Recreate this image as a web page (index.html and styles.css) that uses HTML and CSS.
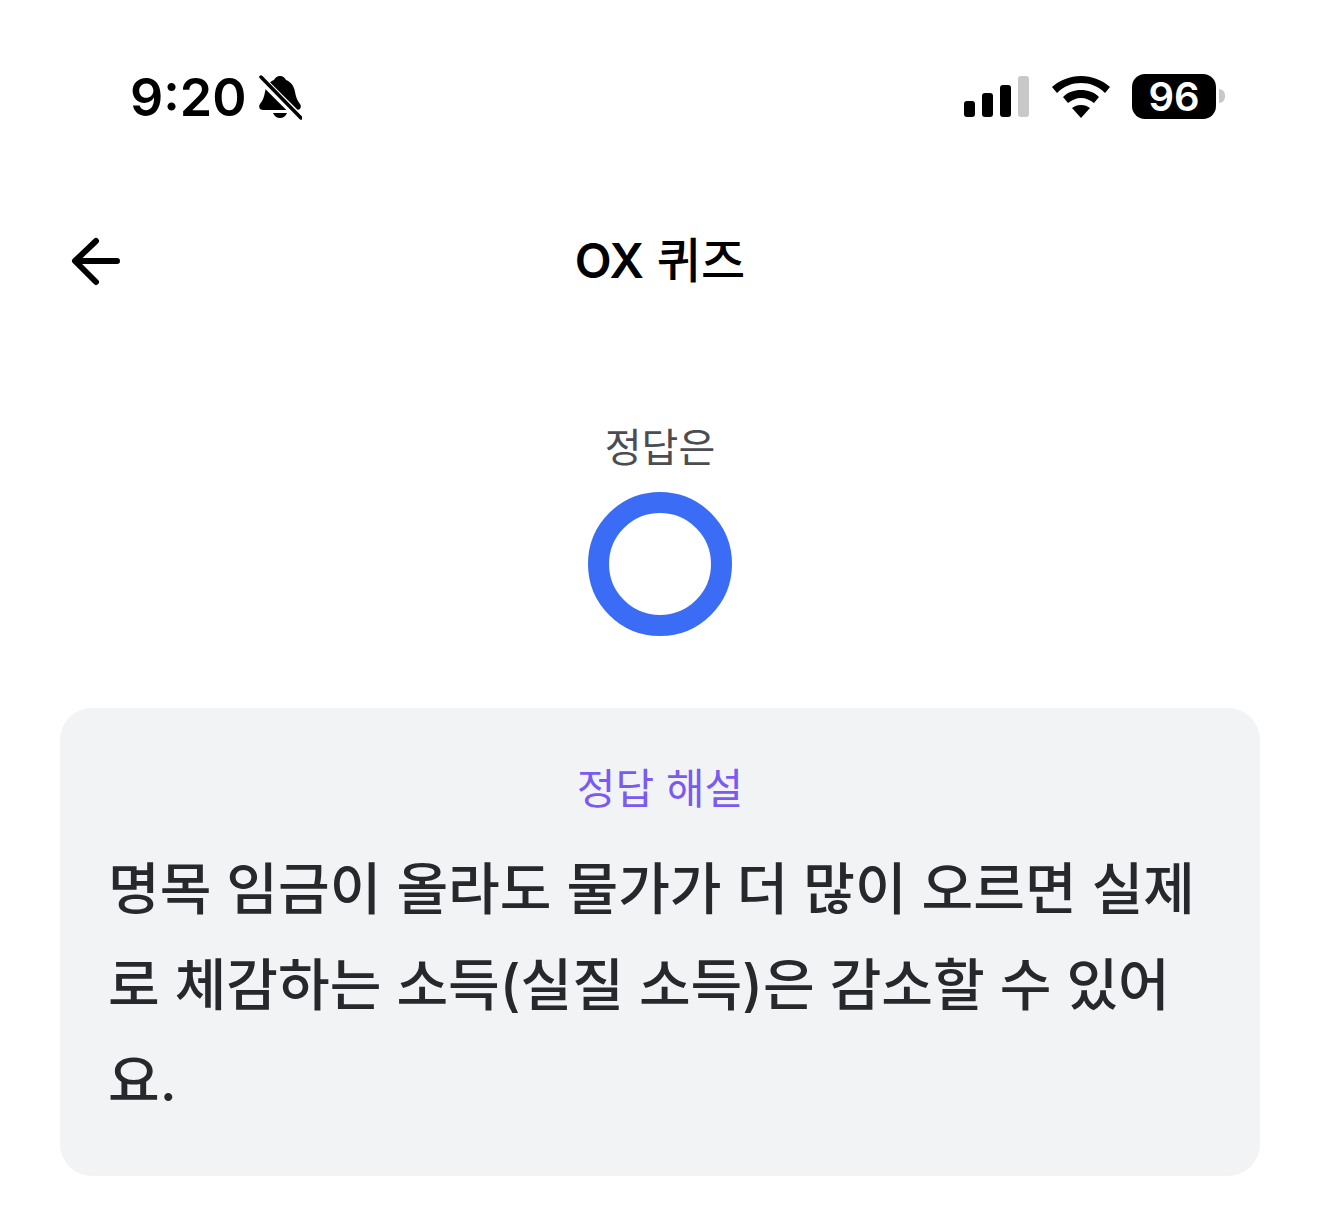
FILE: index.html
```html
<!DOCTYPE html>
<html lang="ko">
<head>
<meta charset="utf-8">
<title>OX 퀴즈</title>
<link rel="stylesheet" href="styles.css">
</head>
<body>
<div class="status-bar">
	<div class="status-left">
		<span class="clock">9:20</span>
		<svg class="bell" width="44" height="46" viewBox="0 0 44 46">
			<path d="M22 1c3 0 5 2 6 4 5 2 8 6 9 12 1 5 2 8 5 12 2 3 0 6-3 6H5c-3 0-5-3-3-6 3-4 4-7 5-12 1-6 4-10 9-12 1-2 3-4 6-4z"/>
			<path d="M15 38h14c-1 3-4 5-7 5s-6-2-7-5z"/>
			<path class="bell-gap" d="M1 2 42 43"/>
			<path class="bell-slash" d="M3 2 43 43"/>
		</svg>
	</div>
	<div class="status-right">
		<div class="signal">
			<span class="bar bar-1"></span>
			<span class="bar bar-2"></span>
			<span class="bar bar-3"></span>
			<span class="bar bar-4"></span>
		</div>
		<svg class="wifi" width="58" height="42" viewBox="0 0 58 42">
			<path d="M29 0c11 0 21 4 29 11l-5 6C46 10 38 7 29 7S12 10 5 17L0 11C8 4 18 0 29 0z"/>
			<path d="M29 14c7 0 13 2 18 7l-5 6c-4-3-8-5-13-5s-9 2-13 5l-5-6c5-5 11-7 18-7z"/>
			<path d="M29 29c4 0 6 1 9 3L29 42l-9-10c3-2 5-3 9-3z"/>
		</svg>
		<div class="battery">
			<span class="battery-body">96</span>
			<span class="battery-cap"></span>
		</div>
	</div>
</div>

<div class="nav-bar">
	<svg class="back" width="52" height="50" viewBox="0 0 52 50">
		<path d="M47 25H6M26 5 5 25l21 21"/>
	</svg>
	<h1 class="nav-title"><span class="nav-latin">OX</span> 퀴즈</h1>
</div>

<div class="answer">
	<div class="answer-label">정답은</div>
	<div class="answer-mark"></div>
</div>

<div class="explain">
	<div class="explain-head">정답 해설</div>
	<p class="explain-text">명목 임금이 올라도 물가가 더 많이 오르면 실제로 체감하는 소득(실질 소득)은 감소할 수 있어요.</p>
</div>
</body>
</html>
```

FILE: styles.css
```css
html, body{
	margin:0;
	padding:0;
	background:#fff;
}

body{
	width:1320px;
	height:1225px;
	overflow:hidden;
	font-family:Inter, "Noto Sans CJK KR", sans-serif;
}

.status-bar{
	display:flex;
	justify-content:space-between;
	align-items:center;
	height:46px;
	padding:73px 95px 0 130px;
}

.status-left, .status-right{
	display:flex;
	align-items:center;
}

.status-left{
	padding-top:4px;
}

.clock{
	font-size:52px;
	font-weight:600;
	line-height:46px;
	color:#000;
}

.bell{
	margin-left:11px;
}

.bell-gap{
	fill:none;
	stroke:#fff;
	stroke-width:8;
}

.bell-slash{
	fill:none;
	stroke:#000;
	stroke-width:3.5;
	stroke-linecap:round;
}

.signal{
	display:flex;
	align-items:flex-end;
	gap:7px;
	height:42px;
}

.bar{
	display:block;
	width:11px;
	background:#000;
	border-radius:3px;
}

.bar-1{ height:16px; }
.bar-2{ height:24px; }
.bar-3{ height:32px; }
.bar-4{ height:41px; background:#c8c8c8; }

.wifi{
	margin:2px 0 0 23px;
}

.battery{
	display:flex;
	align-items:center;
	margin-left:22px;
}

.battery-body{
	display:block;
	width:84px;
	height:45px;
	background:#000;
	border-radius:13px;
	color:#fff;
	font-size:40px;
	font-weight:600;
	line-height:45px;
	text-align:center;
}

.battery-cap{
	display:block;
	width:6px;
	height:14px;
	margin-left:3px;
	background:#c8c8c8;
	border-radius:0 7px 7px 0;
}

.nav-bar{
	position:relative;
	display:flex;
	justify-content:center;
	align-items:center;
	height:60px;
	margin-top:112px;
}

.back{
	position:absolute;
	left:70px;
	top:5px;
	fill:none;
	stroke:#000;
	stroke-width:6;
	stroke-linecap:round;
	stroke-linejoin:round;
}

.nav-title{
	margin:0;
	font-size:48px;
	font-weight:500;
	line-height:58px;
	color:#000;
}

.nav-latin{
	font-weight:600;
}

.answer{
	display:flex;
	flex-direction:column;
	align-items:center;
	margin-top:132px;
}

.answer-label{
	font-size:40px;
	line-height:50px;
	color:#4b4d52;
}

.answer-mark{
	box-sizing:border-box;
	width:144px;
	height:144px;
	margin-top:19px;
	border:21px solid #3b6cf6;
	border-radius:50%;
}

.explain{
	box-sizing:border-box;
	width:1200px;
	height:468px;
	margin:72px 0 0 60px;
	padding:55px 48px 0;
	background:#f2f3f5;
	border-radius:32px;
}

.explain-head{
	font-size:42px;
	line-height:52px;
	color:#7a5af0;
	text-align:center;
}

.explain-text{
	margin:26px 0 0;
	font-size:56.2px;
	font-weight:500;
	line-height:96px;
	color:#26282c;
	word-break:break-all;
}
```
